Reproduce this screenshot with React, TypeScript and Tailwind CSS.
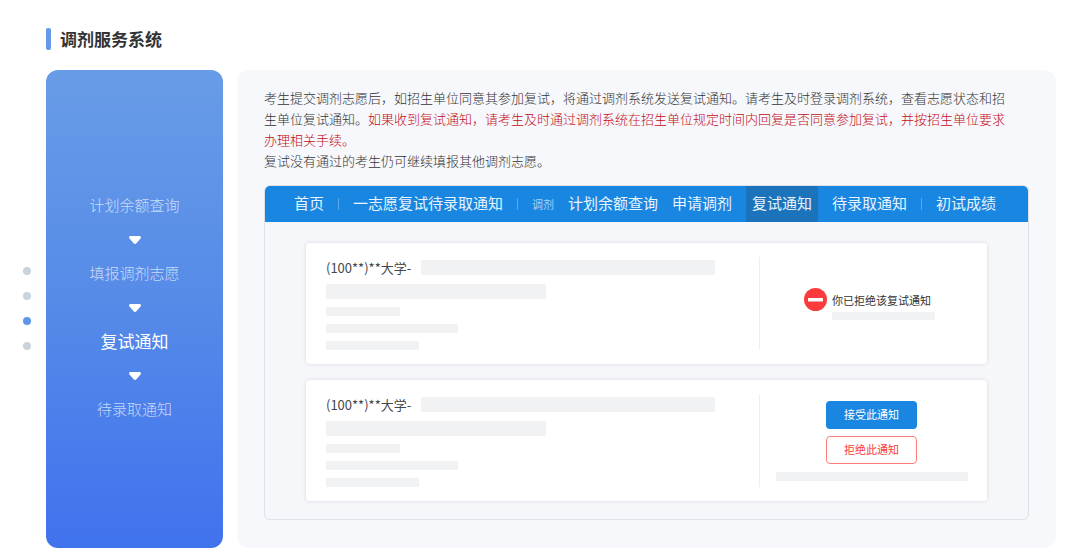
import { Fragment, useState } from 'react';
import clsx from 'clsx';

const steps = ['计划余额查询', '填报调剂志愿', '复试通知', '待录取通知'];

const Arrow = () => (
    <div className="flex h-[34px] items-center justify-center">
        <svg width="12" height="8" viewBox="0 0 12 8" aria-hidden="true">
            <path d="M1.6 0H10.4C11.9 0 12.4 1.6 11.5 2.6L7.4 7.2C6.6 8.1 5.4 8.1 4.6 7.2L.5 2.6C-.4 1.6 .1 0 1.6 0Z" fill="#fff" />
        </svg>
    </div>
);

const Divider = () => <span className="h-3 w-px bg-[#58a8ea]" />;

const NavLink = ({ name, active = false }: { name: string; active?: boolean }) => (
    <a
        href="#"
        className={clsx(
            'flex h-full items-center pb-0.5 text-[15px] whitespace-nowrap text-[#e8f3fc]',
            active && 'bg-[#1b74bb] px-1.5'
        )}
    >
        {name}
    </a>
);

// Carte d'une notification : infos masquées à gauche, actions à droite
const NoticeCard = ({ children }: { children: React.ReactNode }) => (
    <article className="flex rounded-[4px] bg-white pt-3.5 pb-3.5 shadow-[0_0_4px_rgba(0,0,0,0.12)]">
        <div className="flex-1 pt-[3px] pl-5">
            <div className="mr-11 mb-[9px] flex h-[15px] items-center gap-2.5">
                <h3 className="text-[13px] leading-[15px] whitespace-nowrap text-[#45484d]">(100**)**大学-</h3>
                <div className="h-[15px] flex-1 bg-[#f1f2f4]" />
            </div>
            <div className="mb-2 h-[15px] w-[220px] bg-[#f1f2f4]" />
            <div className="mb-2 h-[9px] w-[74px] bg-[#f1f2f4]" />
            <div className="mb-2 h-[9px] w-[132px] bg-[#f1f2f4]" />
            <div className="h-[9px] w-[93px] bg-[#f1f2f4]" />
        </div>
        <div className="flex w-[228px] flex-col items-center justify-center border-l border-[#eeeff1] pr-1">
            {children}
        </div>
    </article>
);

const App = () => {
    const [current, setCurrent] = useState(2);

    return (
        <main className="min-h-screen bg-white pt-7 pr-6 pb-3 pl-[23px] font-['Noto_Sans_CJK_SC',sans-serif]">
            <h1 className="mb-5 ml-[23px] flex items-center gap-[9px] text-[17px] leading-[22px] font-bold text-[#333]">
                <span className="h-[22px] w-[5px] rounded-[2px] bg-[#6699e8]" />
                调剂服务系统
            </h1>

            <div className="flex">
                {/* Pagination verticale */}
                <div className="mr-[15px] flex flex-col justify-center gap-[17px] pb-0.5">
                    {steps.map((step, i) => (
                        <button
                            key={step}
                            aria-label={step}
                            onClick={() => setCurrent(i)}
                            className={clsx('size-2 rounded-full', i === current ? 'bg-[#5f96e8]' : 'bg-[#cad2da]')}
                        />
                    ))}
                </div>

                {/* Étapes */}
                <nav className="mr-3.5 flex w-[177px] shrink-0 flex-col justify-center rounded-xl bg-linear-to-b from-[#689ce7] via-[#558ae8] to-[#4072ee] pb-0.5">
                    {steps.map((step, i) => (
                        <Fragment key={step}>
                            {i > 0 && <Arrow />}
                            <button
                                onClick={() => setCurrent(i)}
                                className={clsx(
                                    'h-[34px] pb-0.5',
                                    i === current ? 'text-[17px] text-white' : 'text-[15px] font-light text-white/70'
                                )}
                            >
                                {step}
                            </button>
                        </Fragment>
                    ))}
                </nav>

                {/* Contenu */}
                <section className="min-w-0 flex-1 rounded-xl bg-[#f6f8fc] px-[27px] pt-[17px] pb-7">
                    <div className="mb-3.5 pr-3 text-[13px] leading-[21px] font-light text-[#333]">
                        <p>
                            考生提交调剂志愿后，如招生单位同意其参加复试，将通过调剂系统发送复试通知。请考生及时登录调剂系统，查看志愿状态和招生单位复试通知。
                            <span className="text-[#c40d16]">
                                如果收到复试通知，请考生及时通过调剂系统在招生单位规定时间内回复是否同意参加复试，并按招生单位要求办理相关手续。
                            </span>
                        </p>
                        <p>复试没有通过的考生仍可继续填报其他调剂志愿。</p>
                    </div>

                    <div className="overflow-hidden rounded-md border border-[#dfe1e6] bg-[#f6f7fa]">
                        <nav className="flex h-9 items-center gap-3.5 bg-[#1987e1] pl-[29px]">
                            <NavLink name="首页" />
                            <Divider />
                            <NavLink name="一志愿复试待录取通知" />
                            <Divider />
                            <span className="text-[11px] whitespace-nowrap text-[#a9d2f4]">调剂</span>
                            <NavLink name="计划余额查询" />
                            <NavLink name="申请调剂" />
                            <NavLink name="复试通知" active />
                            <NavLink name="待录取通知" />
                            <Divider />
                            <NavLink name="初试成绩" />
                        </nav>

                        <div className="flex flex-col gap-4 px-[41px] pt-[21px] pb-[18px]">
                            <NoticeCard>
                                <div className="flex gap-[5px] pr-1">
                                    <svg width="23" height="23" viewBox="0 0 23 23" aria-hidden="true">
                                        <circle cx="11.5" cy="11.5" r="11.5" fill="#fb3b3b" />
                                        <rect x="4" y="10" width="15" height="3.4" rx=".5" fill="#fff" />
                                    </svg>
                                    <div>
                                        <p className="text-[11px] leading-6 text-[#333]">你已拒绝该复试通知</p>
                                        <div className="h-2 w-[103px] bg-[#f1f2f4]" />
                                    </div>
                                </div>
                            </NoticeCard>
                            <NoticeCard>
                                <button className="mb-[7px] h-7 w-[91px] rounded-[4px] bg-[#1987e1] text-[11px] text-white">
                                    接受此通知
                                </button>
                                <button className="mb-2 h-7 w-[91px] rounded-[4px] border border-[#fb7c7c] bg-white text-[11px] text-[#fb3b3b]">
                                    拒绝此通知
                                </button>
                                <div className="h-[9px] w-48 bg-[#f1f2f4]" />
                            </NoticeCard>
                        </div>
                    </div>
                </section>
            </div>
        </main>
    );
};

export default App;
